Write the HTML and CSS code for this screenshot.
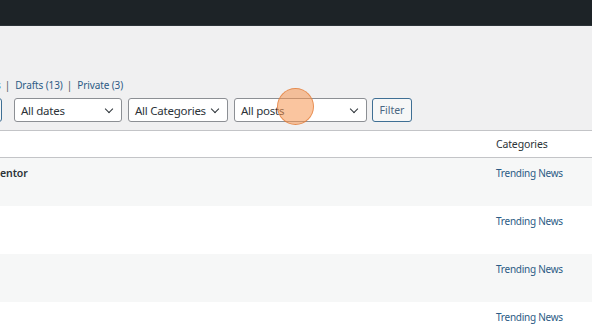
FILE: index.html
```html
<!DOCTYPE html>
<html lang="en">
<head>
    <meta charset="UTF-8">
    <meta name="viewport" content="width=device-width, initial-scale=1.0">
    <title>Posts</title>
    <link rel="stylesheet" href="styles.css">
</head>
<body>
    <div class="admin-bar"></div>

    <div class="wrap">
        <ul class="subsubsub">
            <li class="cut"><a href="#">s</a></li>
            <li class="sep">|</li>
            <li><a href="#">Drafts <span class="count">(13)</span></a></li>
            <li class="sep">|</li>
            <li><a href="#">Private <span class="count">(3)</span></a></li>
        </ul>

        <div class="tablenav">
            <button class="button apply">Apply</button>
            <div class="select dates">All dates</div>
            <div class="select cats">All Categories</div>
            <div class="select posts">All posts</div>
            <button class="button filter">Filter</button>
            <span class="cursor"></span>
        </div>

        <table class="posts-table">
            <thead>
                <tr>
                    <th class="col-title"></th>
                    <th class="col-cat">Categories</th>
                </tr>
            </thead>
            <tbody>
                <tr class="alt">
                    <td class="col-title"><strong>entor</strong></td>
                    <td class="col-cat"><a href="#">Trending News</a></td>
                </tr>
                <tr>
                    <td class="col-title"></td>
                    <td class="col-cat"><a href="#">Trending News</a></td>
                </tr>
                <tr class="alt">
                    <td class="col-title"></td>
                    <td class="col-cat"><a href="#">Trending News</a></td>
                </tr>
                <tr>
                    <td class="col-title"></td>
                    <td class="col-cat"><a href="#">Trending News</a></td>
                </tr>
            </tbody>
        </table>
    </div>
</body>
</html>
```

FILE: styles.css
```css
body {
    margin: 0;
    font-family: 'Noto Sans', 'Open Sans', sans-serif;
    color: #2c3338;
    background-color: #f0f0f1;
    overflow: hidden;
    height: 334px;
}

.admin-bar {
    height: 25px;
    background-color: #1d2327;
    border-bottom: 1px solid #2c3338;
}

.wrap {
    padding-top: 50px;
}

.subsubsub {
    list-style: none;
    margin: 0 0 0 -4px;
    padding: 0;
    display: flex;
    align-items: center;
    height: 18px;
    font-size: 10px;
    letter-spacing: -0.1px;
    color: #50575e;
}

.subsubsub li {
    white-space: nowrap;
}

.subsubsub .sep {
    margin: 0 5px 0 4px;
    color: #50575e;
}

.subsubsub a {
    color: #2c5b85;
    text-decoration: none;
}

.tablenav {
    position: relative;
    display: flex;
    align-items: center;
    margin-top: 4px;
    height: 24px;
}

.button {
    box-sizing: border-box;
    height: 24px;
    border: 1px solid #3f6f94;
    border-radius: 3px;
    background-color: #f6f7f7;
    color: #4a6782;
    font-family: inherit;
    font-size: 10.5px;
    padding: 0 6px;
}

.apply {
    width: 40px;
    margin-left: -38px;
    margin-right: 12px;
}

.filter {
    margin-left: 5px;
    width: 40px;
}

.select {
    box-sizing: border-box;
    height: 24px;
    border: 1px solid #8c8f94;
    border-radius: 3px;
    background-color: #fff;
    font-size: 11.5px;
    letter-spacing: -0.25px;
    color: #2c3338;
    display: flex;
    align-items: center;
    padding-left: 6px;
    margin-right: 6px;
    position: relative;
    white-space: nowrap;
}

.select::after {
    content: "";
    position: absolute;
    right: 9px;
    top: 7px;
    width: 5px;
    height: 5px;
    border-right: 1.3px solid #2c3338;
    border-bottom: 1.3px solid #2c3338;
    transform: rotate(45deg);
}

.dates {
    width: 108px;
}

.cats {
    width: 100px;
}

.posts {
    width: 133px;
    margin-right: 0;
}

.cursor {
    position: absolute;
    left: 277px;
    top: -10px;
    width: 37px;
    height: 37px;
    border-radius: 50%;
    background-color: rgba(245, 150, 80, 0.55);
    border: 1px solid rgba(225, 120, 50, 0.7);
    box-sizing: border-box;
}

.posts-table {
    margin-top: 8px;
    width: 100%;
    border-collapse: collapse;
    background-color: #fff;
    border-top: 1px solid #c3c4c7;
}

.posts-table th {
    height: 26px;
    text-align: left;
    font-weight: normal;
    font-size: 10.5px;
    letter-spacing: -0.15px;
    color: #2c3338;
    border-bottom: 1px solid #c3c4c7;
    padding: 0;
}

.posts-table td {
    height: 48px;
    vertical-align: top;
    padding: 8px 0 0 0;
    box-sizing: border-box;
    font-size: 10px;
    line-height: 14px;
}

.posts-table tr.alt td {
    background-color: #f6f7f7;
}

.col-cat {
    width: 96px;
}

.posts-table td.col-cat {
    letter-spacing: -0.25px;
}

.posts-table td.col-cat a {
    color: #2c5b85;
    text-decoration: none;
}

.posts-table strong {
    font-size: 10.5px;
    letter-spacing: -0.1px;
    font-weight: 600;
    color: #2c3338;
}
```
